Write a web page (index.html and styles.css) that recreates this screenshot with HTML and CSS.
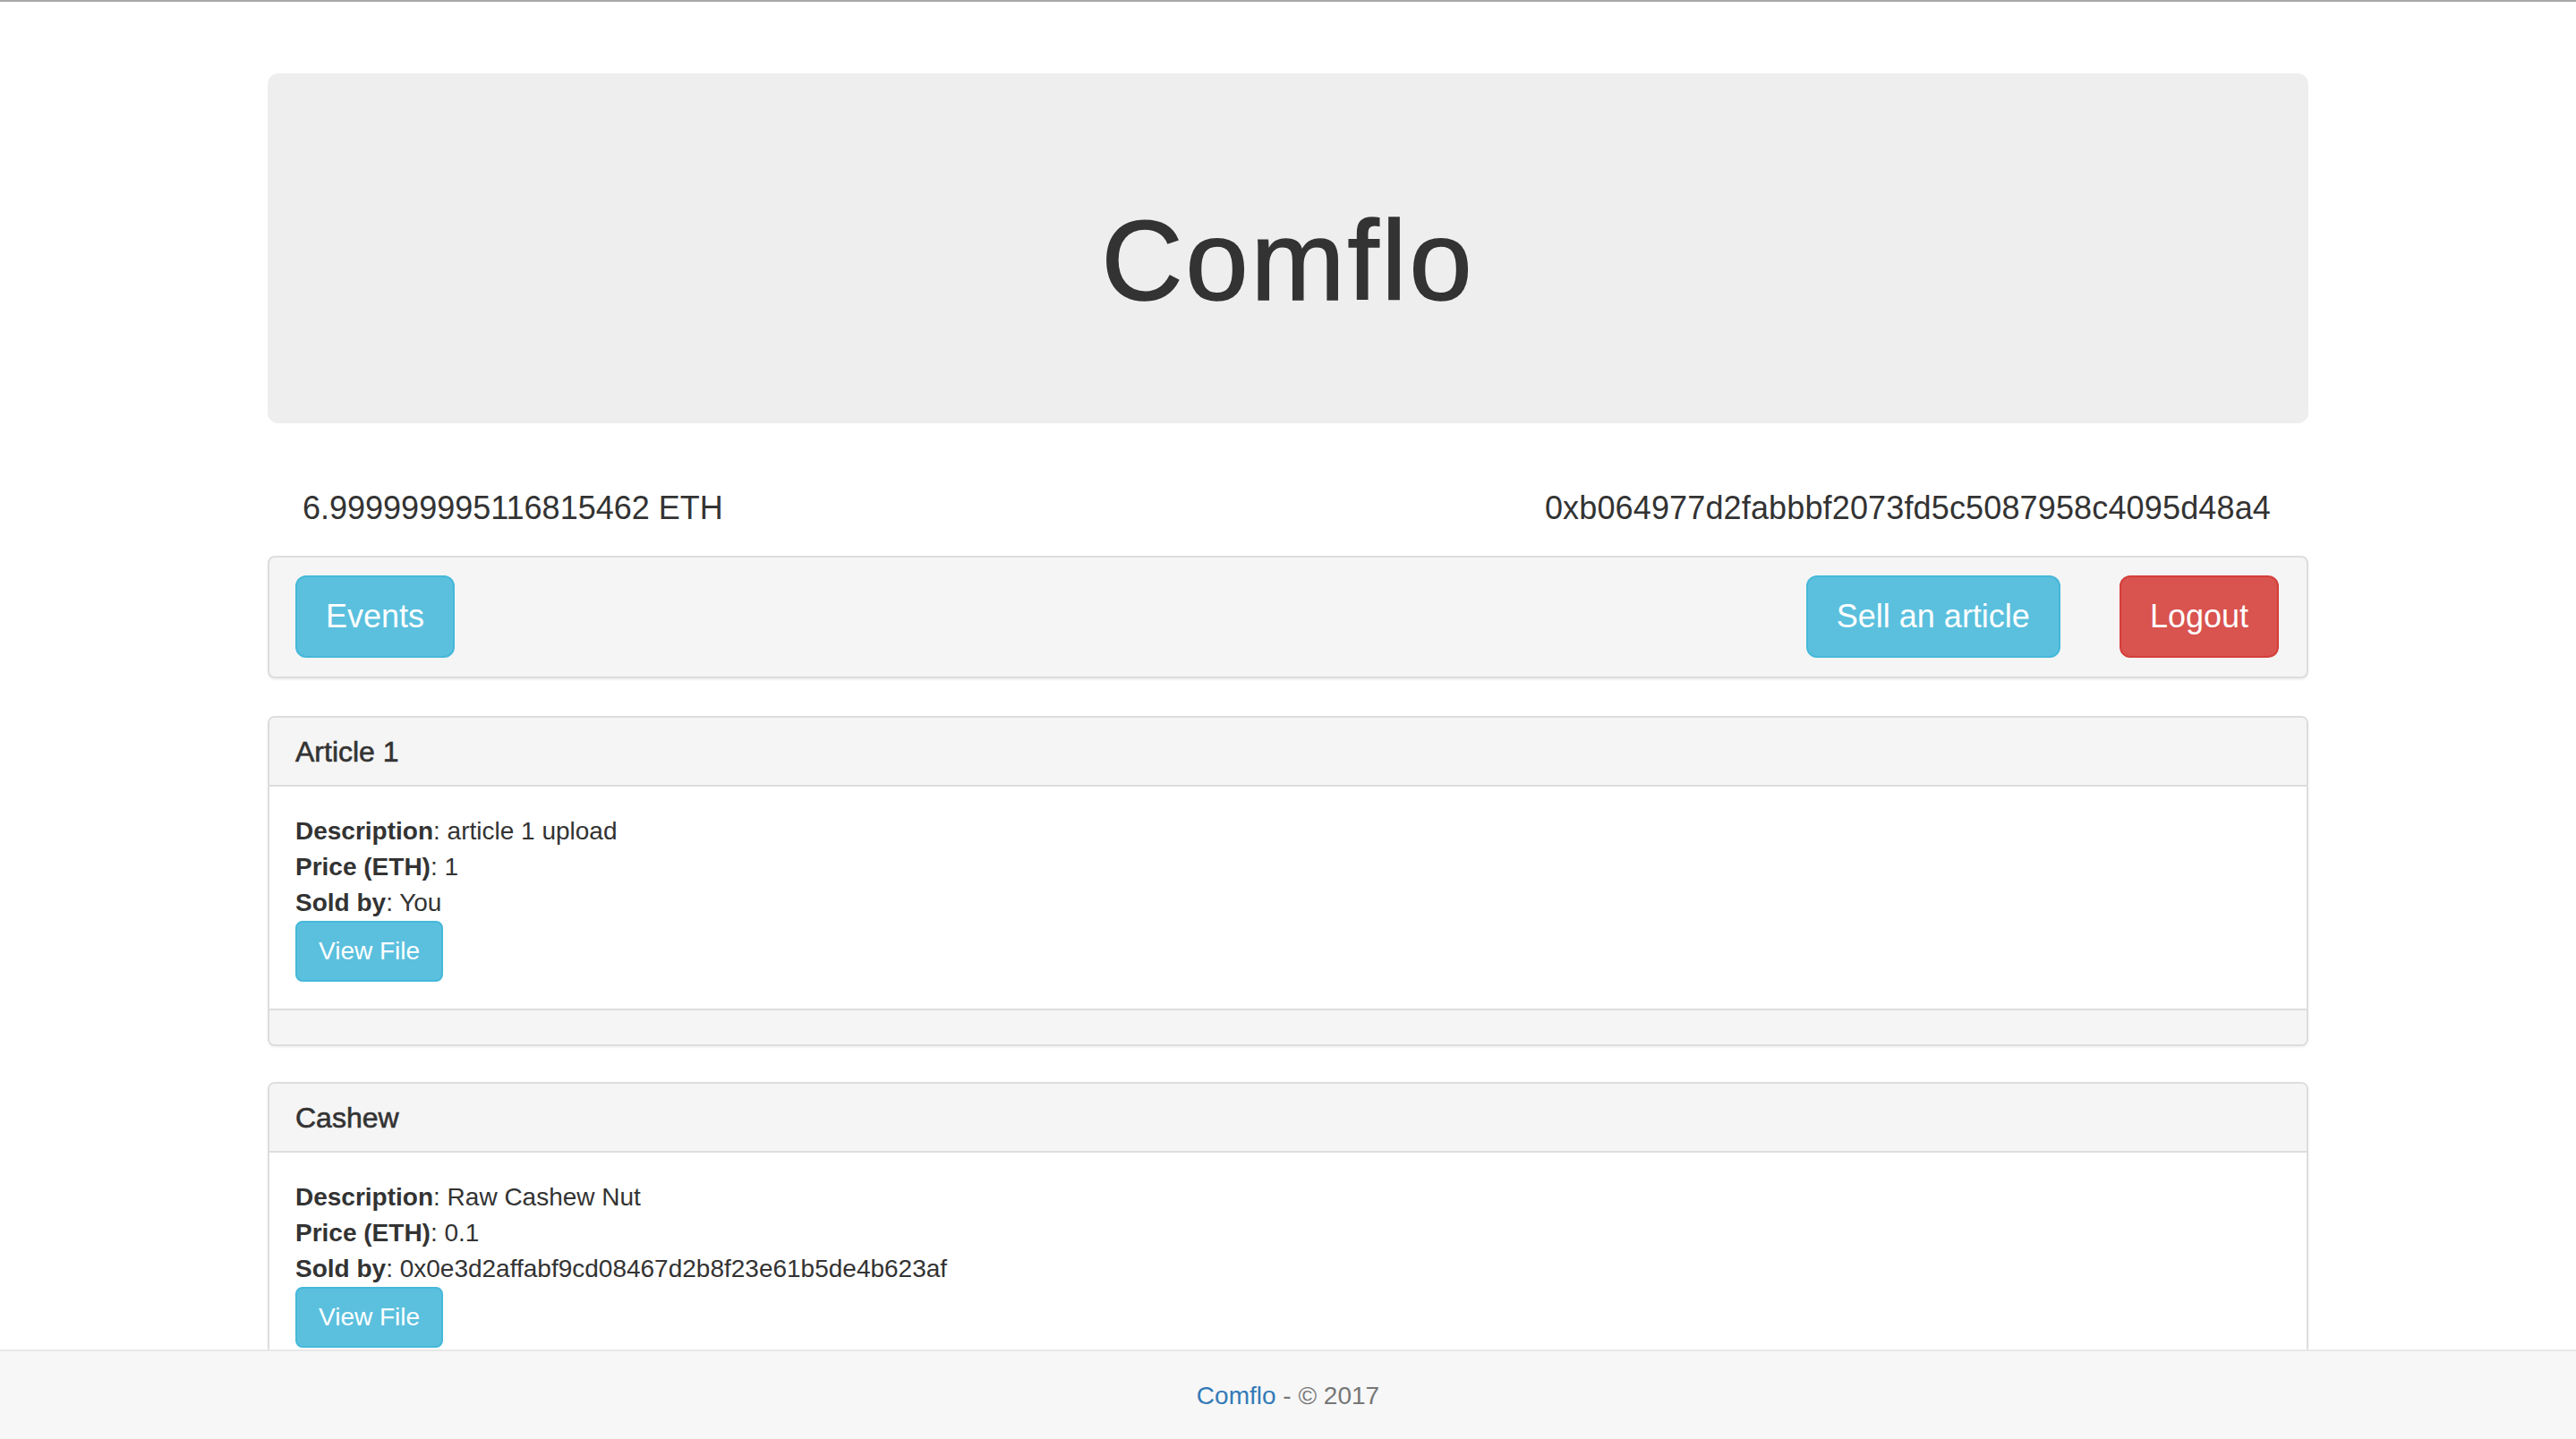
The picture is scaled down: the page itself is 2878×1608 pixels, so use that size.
FILE: index.html
```html
<!DOCTYPE html>
<html lang="en">
<head>
<meta charset="utf-8">
<title>Comflo</title>
<link rel="stylesheet" href="styles.css">
</head>
<body>
<div class="topline"></div>
<div class="container">
  <div class="jumbotron">
    <h1 class="brand">Comflo</h1>
  </div>

  <div class="account">
    <span class="balance">6.999999995116815462 ETH</span>
    <span class="address">0xb064977d2fabbbf2073fd5c5087958c4095d48a4</span>
  </div>

  <div class="toolbar">
    <button class="btn btn-lg btn-info">Events</button>
    <div class="toolbar-right">
      <button class="btn btn-lg btn-info">Sell an article</button>
      <button class="btn btn-lg btn-danger">Logout</button>
    </div>
  </div>

  <div class="panel">
    <div class="panel-heading"><h3 class="panel-title">Article 1</h3></div>
    <div class="panel-body">
      <div class="line"><strong>Description</strong>: article 1 upload</div>
      <div class="line"><strong>Price (ETH)</strong>: 1</div>
      <div class="line"><strong>Sold by</strong>: You</div>
      <button class="btn btn-info">View File</button>
    </div>
    <div class="panel-footer"></div>
  </div>

  <div class="panel">
    <div class="panel-heading"><h3 class="panel-title">Cashew</h3></div>
    <div class="panel-body">
      <div class="line"><strong>Description</strong>: Raw Cashew Nut</div>
      <div class="line"><strong>Price (ETH)</strong>: 0.1</div>
      <div class="line"><strong>Sold by</strong>: 0x0e3d2affabf9cd08467d2b8f23e61b5de4b623af</div>
      <button class="btn btn-info">View File</button>
    </div>
    <div class="panel-footer"></div>
  </div>
</div>

<footer class="footer">
  <a href="#" class="footer-link">Comflo</a> - &copy; 2017
</footer>
</body>
</html>
```
FILE: styles.css
```css
* { box-sizing: border-box; }

html, body {
  margin: 0;
  padding: 0;
  background: #fff;
}

body {
  font-family: "Liberation Sans", Arial, Helvetica, sans-serif;
  font-size: 28px;
  line-height: 40px;
  color: #333;
  padding-bottom: 200px;
}

.topline {
  height: 2px;
  background: #a9a9a9;
}

.container {
  width: 2280px;
  margin: 0 auto;
}

.jumbotron {
  margin-top: 80px;
  background: #eeeeee;
  border-radius: 12px;
  padding: 101px 120px 91px;
  text-align: center;
  margin-bottom: 75px;
}

.brand {
  margin: 40px 0 20px;
  font-size: 126px;
  line-height: 1.1;
  font-weight: 400;
  color: #333;
  -webkit-text-stroke: 1.6px #333;
  letter-spacing: 3px;
}

.account {
  display: flex;
  justify-content: space-between;
  padding: 0 42px 0 39px;
  font-size: 36px;
  line-height: 40px;
  margin-bottom: 33px;
}

.address {
  letter-spacing: 0.15px;
}

.toolbar {
  display: flex;
  justify-content: space-between;
  align-items: center;
  background: #f5f5f5;
  border: 2px solid #dddddd;
  border-radius: 8px;
  padding: 20px 31px 21px 29px;
  box-shadow: 0 2px 2px rgba(0, 0, 0, 0.06);
  margin-bottom: 42px;
}

.toolbar-right {
  display: flex;
  gap: 66px;
}

.btn {
  display: inline-block;
  font-family: inherit;
  font-size: 28px;
  line-height: 40px;
  padding: 12px 24px;
  border: 2px solid transparent;
  border-radius: 8px;
  color: #fff;
  cursor: pointer;
  white-space: nowrap;
}

.btn-lg {
  font-size: 36px;
  line-height: 48px;
  padding: 20px 32px;
  border-radius: 12px;
}

.btn-info {
  background: #5bc0de;
  border-color: #46b8da;
}

.btn-danger {
  background: #d9534f;
  border-color: #d43f3a;
}

.panel {
  border: 2px solid #dddddd;
  border-radius: 8px;
  background: #fff;
  box-shadow: 0 2px 2px rgba(0, 0, 0, 0.05);
  margin-bottom: 40px;
  overflow: hidden;
}

.panel-heading {
  background: #f5f5f5;
  border-bottom: 2px solid #dddddd;
  padding: 21px 29px 19px;
}

.panel-title {
  margin: 0;
  font-size: 32px;
  line-height: 1.1;
  font-weight: 400;
  color: #333;
  -webkit-text-stroke: 0.6px #333;
}

.panel-body {
  padding: 30px 29px;
}

.line strong {
  font-weight: 700;
}

.panel-footer {
  background: #f5f5f5;
  border-top: 2px solid #dddddd;
  height: 40px;
}

.footer {
  position: fixed;
  left: 0;
  right: 0;
  bottom: 0;
  height: 100px;
  background: #f7f7f7;
  border-top: 2px solid #e7e7e7;
  text-align: center;
  color: #777;
  font-size: 28px;
  line-height: 40px;
  padding-top: 30px;
}

.footer-link {
  color: #337ab7;
  text-decoration: none;
}
```
